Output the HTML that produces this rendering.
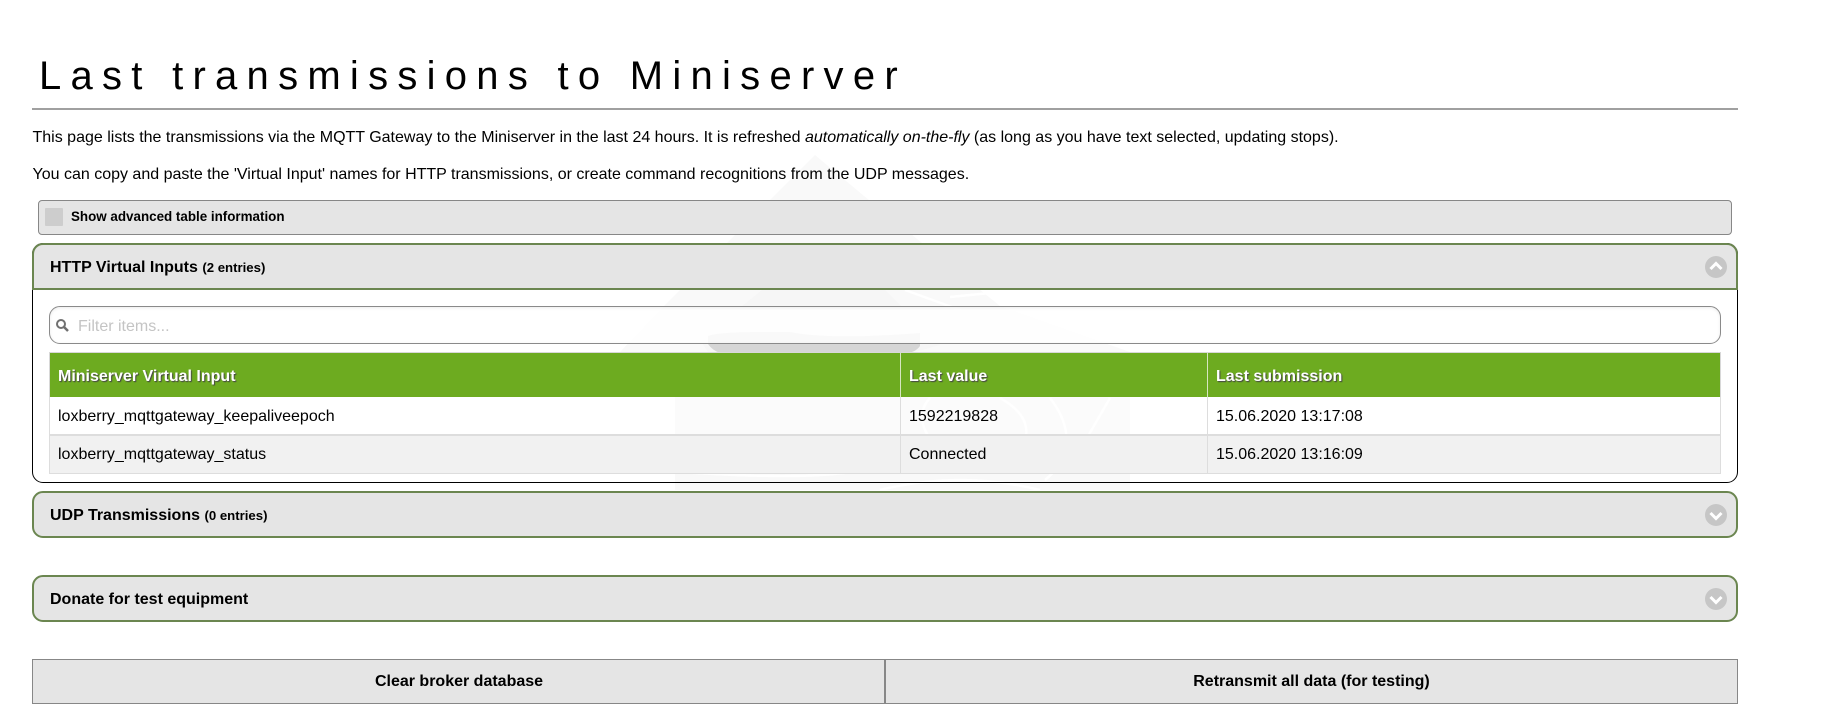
<!DOCTYPE html>
<html>
<head>
<meta charset="utf-8">
<style>
html,body{margin:0;padding:0;width:1826px;height:710px;overflow:hidden;background:#fff;}
body{position:relative;font-family:"Liberation Sans",Arial,sans-serif;font-size:16px;color:#000;}
.a{position:absolute;box-sizing:border-box;}
.t{position:absolute;white-space:nowrap;line-height:20px;height:20px;}
.b{font-weight:700;}
.bar{position:absolute;box-sizing:border-box;left:32px;width:1706px;height:47px;background:#e5e5e5;border:2px solid #6b8650;border-radius:11px;}
.ic{position:absolute;left:1705px;width:22px;height:22px;}
.s{font-size:13.2px;}
.th{color:#fff;font-weight:700;text-shadow:1px 1px 1px #444;}
</style>
</head>
<body>
<svg class="a" style="left:0;top:0;z-index:0" width="1826" height="710" viewBox="0 0 1826 710">
  <polygon points="815,155 864,196 1000,306 1130,352 1130,490 675,490 675,352 620,352 660,310" fill="#f9f9f9"/>
  <polygon points="762,290 885,290 940,345 915,352 708,352 700,340" fill="#f6f6f6"/>
  <path d="M708,336 Q720,331 790,332 Q830,340 920,333 L920,346 Q915,353 905,353 L720,353 Q712,350 708,344Z" fill="#d6d6d6"/>
  <g fill="none" stroke="#fff" stroke-width="2.5">
    <path d="M660,300 L730,250 M905,290 L960,310 M950,297 L1000,292 L1030,300"/>
    <path d="M930,398 C900,430 960,480 1020,470 M1000,398 C1040,420 1030,450 1000,465 M1050,398 C1075,430 1070,460 1045,480 M1110,398 L1080,450"/>
    <path d="M880,490 Q960,470 1040,490 M680,472 Q800,480 850,472"/>
  </g>
</svg>

<div class="t" id="h" style="left:39px;top:58px;font-size:40px;letter-spacing:9.27px;line-height:36px;height:36px;z-index:2">Last transmissions to Miniserver</div>
<div class="a" style="left:32px;top:108px;width:1706px;height:2px;background:#a0a0a0;z-index:2"></div>

<div class="t" style="left:32.5px;top:127.5px;z-index:2">This page lists the transmissions via the MQTT Gateway to the Miniserver in the last 24 hours. It is refreshed <i>automatically on-the-fly</i> (as long as you have text selected, updating stops).</div>
<div class="t" style="left:32.5px;top:165px;z-index:2">You can copy and paste the 'Virtual Input' names for HTTP transmissions, or create command recognitions from the UDP messages.</div>

<div class="a" style="left:38px;top:200px;width:1694px;height:35px;background:#e5e5e5;border:1px solid #878787;border-radius:4px;z-index:2"></div>
<div class="a" style="left:45px;top:208px;width:18px;height:18px;background:#cdcdcd;border-radius:1px;z-index:3"></div>
<div class="t b" style="left:71px;top:207px;font-size:13.4px;z-index:3">Show advanced table information</div>

<div class="a" style="left:32px;top:243px;width:1706px;height:240px;border:1.5px solid #000;border-radius:11px;z-index:1"></div>
<div class="bar" style="top:243px;border-radius:11px 11px 0 0;z-index:2"></div>
<div class="t b" style="left:50px;top:258px;z-index:3">HTTP Virtual Inputs <span class="s">(2 entries)</span></div>
<svg class="ic" style="top:256px;z-index:3" viewBox="0 0 22 22"><circle cx="11" cy="11" r="11" fill="#c6c6c6"/><path d="M5.5 13 L11 7.5 L16.5 13" fill="none" stroke="#fff" stroke-width="3"/></svg>

<div class="a" style="left:49px;top:306px;width:1672px;height:38px;border:1px solid #8a8a8a;border-radius:11px;background:rgba(255,255,255,.85);box-shadow:inset 0 1px 3px rgba(0,0,0,.08);z-index:2"></div>
<svg class="a" style="left:55px;top:318px;z-index:3" width="15" height="15" viewBox="0 0 15 15"><circle cx="6" cy="6" r="4" fill="none" stroke="#707070" stroke-width="2"/><path d="M9 9 L13 13" stroke="#707070" stroke-width="2.5"/></svg>
<div class="t" style="left:78px;top:317px;color:#c4c4c4;z-index:3">Filter items...</div>

<div class="a" style="left:49px;top:352px;width:1672px;height:45px;background:#6dab20;border:1px solid #d8d8d8;border-bottom:0;z-index:2"></div>
<div class="a" style="left:49px;top:397px;width:1672px;height:38px;background:rgba(255,255,255,.3);border:1px solid #dddddd;border-top:0;z-index:2"></div>
<div class="a" style="left:49px;top:435px;width:1672px;height:39px;background:#f1f1f1;border:1px solid #dddddd;border-top:0;z-index:2"></div>
<div class="a" style="left:49px;top:435px;width:1672px;height:1px;background:#dddddd;z-index:2"></div>
<div class="a" style="left:900px;top:353px;width:1px;height:44px;background:#d6e6c0;z-index:3"></div>
<div class="a" style="left:1207px;top:353px;width:1px;height:44px;background:#d6e6c0;z-index:3"></div>
<div class="a" style="left:900px;top:397px;width:1px;height:76px;background:#dddddd;z-index:3"></div>
<div class="a" style="left:1207px;top:397px;width:1px;height:76px;background:#dddddd;z-index:3"></div>

<div class="t th" style="left:58px;top:367px;z-index:4">Miniserver Virtual Input</div>
<div class="t th" style="left:909px;top:367px;z-index:4">Last value</div>
<div class="t th" style="left:1216px;top:367px;z-index:4">Last submission</div>

<div class="t" style="left:58px;top:407px;z-index:4">loxberry_mqttgateway_keepaliveepoch</div>
<div class="t" style="left:909px;top:407px;z-index:4">1592219828</div>
<div class="t" style="left:1216px;top:407px;z-index:4">15.06.2020 13:17:08</div>
<div class="t" style="left:58px;top:445px;z-index:4">loxberry_mqttgateway_status</div>
<div class="t" style="left:909px;top:445px;z-index:4">Connected</div>
<div class="t" style="left:1216px;top:445px;z-index:4">15.06.2020 13:16:09</div>

<div class="bar" style="top:491px;z-index:2"></div>
<div class="t b" style="left:50px;top:506px;z-index:3">UDP Transmissions <span class="s">(0 entries)</span></div>
<svg class="ic" style="top:504px;z-index:3" viewBox="0 0 22 22"><circle cx="11" cy="11" r="11" fill="#c6c6c6"/><path d="M5.5 9 L11 14.5 L16.5 9" fill="none" stroke="#fff" stroke-width="3"/></svg>

<div class="bar" style="top:575px;z-index:2"></div>
<div class="t b" style="left:50px;top:590px;z-index:3">Donate for test equipment</div>
<svg class="ic" style="top:588px;z-index:3" viewBox="0 0 22 22"><circle cx="11" cy="11" r="11" fill="#c6c6c6"/><path d="M5.5 9 L11 14.5 L16.5 9" fill="none" stroke="#fff" stroke-width="3"/></svg>

<div class="a" style="left:32px;top:659px;width:853px;height:45px;background:#e5e5e5;border:1px solid #878787;z-index:2;"></div>
<div class="a" style="left:885px;top:659px;width:853px;height:45px;background:#e5e5e5;border:1px solid #878787;z-index:2;"></div>
<div class="t b" style="left:32px;width:854px;text-align:center;top:672px;z-index:3">Clear broker database</div>
<div class="t b" style="left:885px;width:853px;text-align:center;top:672px;z-index:3">Retransmit all data (for testing)</div>
</body>
</html>
